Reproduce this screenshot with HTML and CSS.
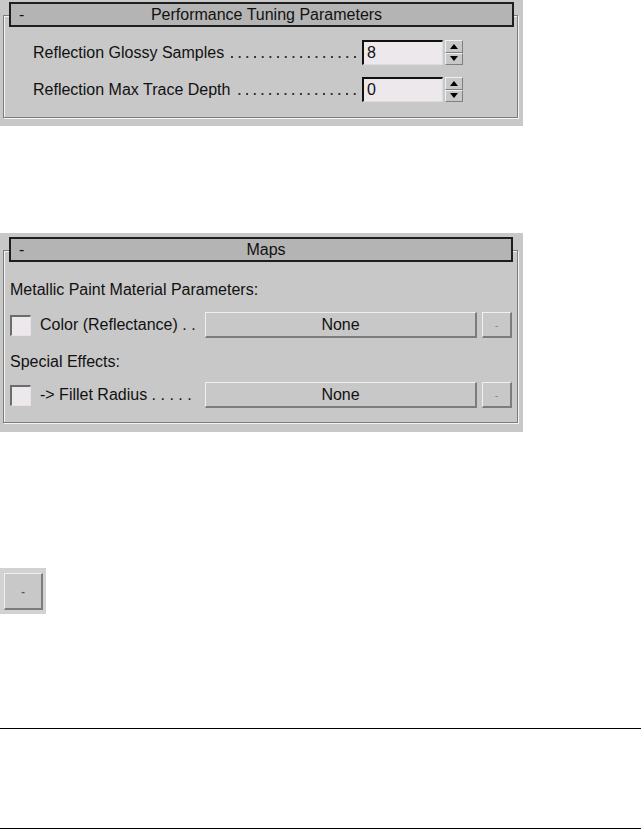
FILE: index.html
```html
<!DOCTYPE html>
<html lang="en">
<head>
    <meta charset="UTF-8">
    <meta name="viewport" content="width=device-width, initial-scale=1.0">
    <title>Rollout Panels</title>
    <link rel="stylesheet" href="styles.css">
</head>
<body>
    <!-- Performance rollout -->
    <section class="rollout perf">
        <div class="frame perf-frame">
            <div class="title-bar">
                <span class="collapse">-</span>
                <span class="title">Performance Tuning Parameters</span>
            </div>
            <div class="param-row">
                <div class="leader">Reflection Glossy Samples<span class="dots"></span></div>
                <div class="num-field">8</div>
                <div class="spinner">
                    <span class="spin up"></span>
                    <span class="spin down"></span>
                </div>
            </div>
            <div class="param-row">
                <div class="leader">Reflection Max Trace Depth<span class="dots"></span></div>
                <div class="num-field">0</div>
                <div class="spinner">
                    <span class="spin up"></span>
                    <span class="spin down"></span>
                </div>
            </div>
        </div>
    </section>

    <!-- Maps rollout -->
    <section class="rollout maps">
        <div class="frame maps-frame">
            <div class="title-bar">
                <span class="collapse">-</span>
                <span class="title">Maps</span>
            </div>
            <div class="group-label first">Metallic Paint Material Parameters:</div>
            <div class="map-row">
                <span class="checkbox"></span>
                <span class="map-label">Color (Reflectance) . .</span>
                <button class="map-btn">None</button>
                <button class="mini-btn">-</button>
            </div>
            <div class="group-label">Special Effects:</div>
            <div class="map-row">
                <span class="checkbox"></span>
                <span class="map-label">-&gt; Fillet Radius . . . . .</span>
                <button class="map-btn">None</button>
                <button class="mini-btn">-</button>
            </div>
        </div>
    </section>

    <!-- Standalone button sample -->
    <div class="button-sample">
        <button class="mini-btn large">-</button>
    </div>

    <div class="rule first-rule"></div>
    <div class="rule second-rule"></div>
</body>
</html>
```

FILE: styles.css
```css
body {
    margin: 0;
    padding: 0;
    background: #fff;
    font-family: "Liberation Sans", Arial, sans-serif;
    font-size: 16px;
    color: #111;
}

/* Rollout panels */
.rollout {
    width: 523px;
    box-sizing: border-box;
    background: #c8c8c8;
    padding-left: 3px;
}

.perf {
    height: 126px;
    padding-top: 15px;
}

.maps {
    height: 199px;
    margin-top: 107px;
    padding-top: 17px;
}

.frame {
    width: 515px;
    box-sizing: border-box;
    border: 1px solid #7c7c7c;
    box-shadow: 1px 1px 0 #f4f4f4, inset 1px 1px 0 #f4f4f4;
}

.perf-frame {
    height: 103px;
}

.maps-frame {
    height: 173px;
    padding-left: 6px;
}

.title-bar {
    display: flex;
    align-items: center;
    width: 505px;
    height: 25px;
    box-sizing: border-box;
    margin: -14px 0 0 5px;
    border: 2px solid #1e1e1e;
    background: #b4b4b4;
    position: relative;
}

.maps-frame .title-bar {
    width: 504px;
    margin-left: -1px;
}

.collapse {
    width: 20px;
    padding-left: 8px;
}

.title {
    flex: 1;
    text-align: center;
    padding-right: 18px;
}

/* Spinner rows */
.param-row {
    display: flex;
    align-items: center;
    height: 25px;
    margin-top: 12px;
    padding-left: 29px;
}

.title-bar + .param-row {
    margin-top: 13px;
}

.leader {
    width: 329px;
    display: flex;
    align-items: baseline;
    white-space: nowrap;
}

.dots {
    flex: 1;
    height: 2px;
    margin: 0 3px 0 5px;
    background: radial-gradient(circle, #333 0.9px, transparent 1.1px) right center / 7.7px 2px repeat-x;
}

.num-field {
    width: 81px;
    height: 25px;
    box-sizing: border-box;
    padding-left: 3px;
    line-height: 21px;
    background: #ece8ec;
    border-top: 2px solid #111;
    border-left: 2px solid #111;
    border-right: 1px solid #dcdcdc;
    border-bottom: 1px solid #dcdcdc;
}

.spinner {
    display: flex;
    flex-direction: column;
    margin-left: 2px;
    width: 18px;
    height: 25px;
}

.spin {
    flex: 1;
    display: flex;
    align-items: center;
    justify-content: center;
    background: #c8c8c8;
    border-top: 1px solid #f0f0f0;
    border-left: 1px solid #f0f0f0;
    border-bottom: 1px solid #808080;
    border-right: 1px solid #808080;
}

.spin::after {
    content: "";
    border-left: 4px solid transparent;
    border-right: 4px solid transparent;
}

.spin.up::after {
    border-bottom: 5px solid #000;
}

.spin.down::after {
    border-top: 5px solid #000;
}

/* Maps rows */
.group-label {
    height: 20px;
    line-height: 20px;
    margin-top: 14px;
}

.group-label.first {
    margin-top: 18px;
}

.map-row {
    display: flex;
    align-items: center;
    height: 26px;
    margin-top: 12px;
}

.group-label:not(.first) + .map-row {
    margin-top: 10px;
}

.checkbox {
    width: 21px;
    height: 21px;
    box-sizing: border-box;
    background: #ece8ec;
    border-top: 2px solid #6c6c6c;
    border-left: 2px solid #6c6c6c;
    border-right: 1px solid #e4e4e4;
    border-bottom: 1px solid #e4e4e4;
}

.map-label {
    width: 165px;
    padding-left: 9px;
    white-space: nowrap;
}

.map-btn,
.mini-btn {
    font-family: "Liberation Sans", Arial, sans-serif;
    font-size: 16px;
    color: #111;
    background: #c8c8c8;
    padding: 0;
    height: 26px;
    box-sizing: border-box;
    border-top: 1px solid #f0f0f0;
    border-left: 1px solid #f0f0f0;
    border-right: 2px solid #7c7c7c;
    border-bottom: 2px solid #7c7c7c;
}

.map-btn {
    width: 272px;
}

.mini-btn {
    width: 30px;
    margin-left: 5px;
    font-size: 11px;
    color: #8a8a8a;
}

/* Standalone button */
.button-sample {
    width: 46px;
    height: 46px;
    box-sizing: border-box;
    margin-top: 136px;
    padding: 5px 0 0 4px;
    background: #d2d2d2;
}

.mini-btn.large {
    width: 39px;
    height: 37px;
    margin-left: 0;
    font-weight: bold;
    color: #555;
}

/* Page rules */
.rule {
    height: 1px;
    background: #000;
}

.first-rule {
    margin-top: 114px;
}

.second-rule {
    margin-top: 99px;
}
```
